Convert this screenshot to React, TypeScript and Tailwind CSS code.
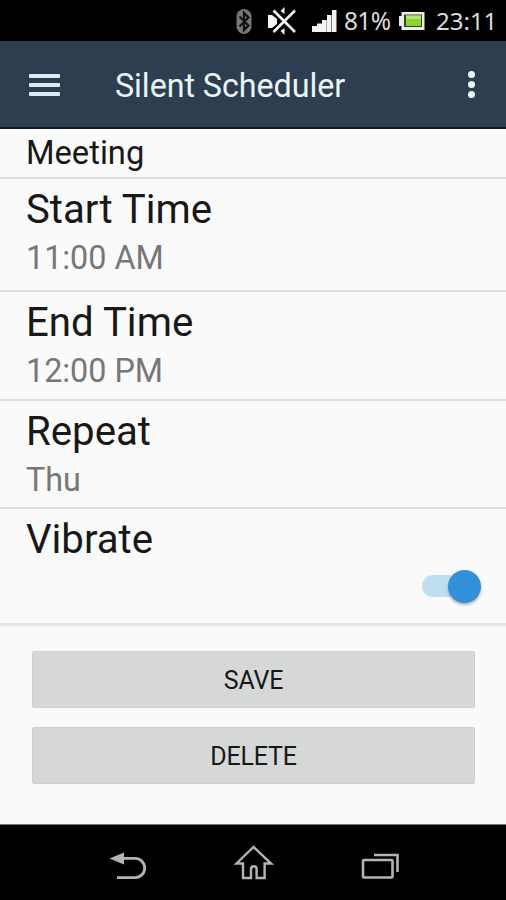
import React from "react";

function StatusBar() {
  return (
    <div className="flex h-[41px] w-full items-center bg-black pl-[235px] font-['Noto_Sans',sans-serif] text-[#dcdcdc]">
      <svg width="107" height="41" viewBox="235 0 107 41" className="shrink-0">
        <rect x="236.5" y="9" width="15" height="25" rx="7.5" fill="#777" />
        <path d="M239.5 16.5l9 9-4.5 4.5V13l4.5 4.5-9 9" fill="none" stroke="#111" strokeWidth="2.2" />
        <path d="M268 15h4l5 4v5l-5 4h-4z" fill="#f4f4f4" />
        <path d="M280.500 11l4-4v7zM280.500 31l4 4v-7z" fill="#f4f4f4" />
        <path d="M273.500 10.500l21.500 21.500M295 10.500l-21.500 21.500" stroke="#f4f4f4" strokeWidth="2.600" />
        <path d="M312 26h5v6h-5zM317 23.500h5v8.500h-5zM322 20h4.700v12H322zM327 15h4.500v17H327zM332 10h4.500v22H332z" fill="#f4f4f4" />
      </svg>
      <span className="w-[57px] shrink-0 whitespace-nowrap pl-[2px] text-[24.500px] leading-[41px] tracking-[-0.7px]">81%</span>
      <svg width="28" height="41" viewBox="399 0 28 41" className="shrink-0">
        <path d="M398.500 16h3v-4h23v18h-23v-4h-3z" fill="#eeeee8" />
        <rect x="404" y="14.500" width="18" height="12.500" fill="#36432a" />
        <rect x="406" y="15.500" width="15" height="10.500" fill="#8ed32e" />
        <rect x="406" y="15.500" width="15" height="3.500" fill="#b4e56c" />
      </svg>
      <span className="whitespace-nowrap pl-[9px] text-[24px] leading-[41px]">23:11</span>
    </div>
  );
}

function AppBar() {
  return (
    <header className="flex h-[88px] items-center border-b-2 border-[#0f1a2c] bg-[#2d3e50] pl-[29px]">
      <div className="flex w-[86px] flex-col gap-[5px] pt-[1px]">
        <span className="h-[4px] w-[31px] rounded-[1px] bg-[#dfebf1]" />
        <span className="h-[4px] w-[31px] rounded-[1px] bg-[#dfebf1]" />
        <span className="h-[4px] w-[31px] rounded-[1px] bg-[#dfebf1]" />
      </div>
      <h1 className="flex-1 whitespace-nowrap pt-[3px] text-[32.300px] font-normal leading-[40px] tracking-[-0.08px] text-[#e9f5fb]">Silent Scheduler</h1>
      <div className="flex w-[38px] flex-col gap-[3px] pt-[1px]">
        <span className="size-[7px] rounded-full bg-[#eef7fb]" />
        <span className="size-[7px] rounded-full bg-[#eef7fb]" />
        <span className="size-[7px] rounded-full bg-[#eef7fb]" />
      </div>
    </header>
  );
}

function Toggle() {
  return (
    <div className="flex justify-end pr-[24px]">
      <div className="flex h-[34px] w-[60px] items-center">
        <div className="h-[22px] w-[29px] shrink-0 rounded-l-full bg-[#bfdff1]" />
        <div className="-ml-[3px] size-[33px] shrink-0 rounded-full bg-[#3190d7] shadow-[0_2px_3px_rgba(0,0,0,0.3)]" />
      </div>
    </div>
  );
}

function Setting({ title, value }: { title: string; value: string }) {
  return (
    <>
      <div className="pt-[6px] text-[40.200px] leading-[50px]">{title}</div>
      <div className="pt-[1px] text-[32.300px] leading-[45px] text-[#777]">{value}</div>
    </>
  );
}

export default function App() {
  return (
    <div className="flex h-[900px] w-[506px] flex-col overflow-hidden bg-[#fafafa] font-['Roboto',sans-serif] text-[#181818]">
      <StatusBar />
      <AppBar />
      <div className="h-[50px] border-b-2 border-[#dedede] pl-[26px] text-[32.700px] leading-[48px]">Meeting</div>
      <section className="h-[113px] border-b-2 border-[#dedede] pl-[26px]">
        <Setting title="Start Time" value="11:00 AM" />
      </section>
      <section className="h-[109px] border-b-2 border-[#dedede] pl-[26px]">
        <Setting title="End Time" value="12:00 PM" />
      </section>
      <section className="h-[108px] border-b-2 border-[#dedede] pl-[26px]">
        <Setting title="Repeat" value="Thu" />
      </section>
      <section className="h-[117px] border-b-[3px] border-[#e6e6e6] pl-[26px]">
        <div className="pt-[6px] text-[40.200px] leading-[50px]">Vibrate</div>
        <div className="pt-[4px]">
          <Toggle />
        </div>
      </section>
      <div className="flex flex-1 flex-col gap-[19px] px-[32px] pt-[25px]">
        <button className="h-[57px] w-[443px] shrink-0 rounded-[2px] border border-[#cdcfce] bg-[#d6d8d7] pt-[2px] text-[25px] tracking-[-0.2px]">SAVE</button>
        <button className="h-[57px] w-[443px] shrink-0 rounded-[2px] border border-[#cdcfce] bg-[#d6d8d7] pt-[2px] text-[25px] tracking-[-0.2px]">DELETE</button>
      </div>
      <nav className="h-[76px] shrink-0 border-t border-[#777] bg-black">
        <svg className="block" width="506" height="75" viewBox="0 825 506 75" fill="none" stroke="#b4b4b4" strokeWidth="2.400">
          <path d="M109.500 858.500l14.500-6v12z" fill="#b4b4b4" stroke="none" />
          <path d="M123 858.300h12a9.700 9.700 0 0 1 0 19.400H117" strokeWidth="2.800" />
          <path d="M253.500 847l-17 16.500h6.500v14.500h8v-9a2.800 2.800 0 0 1 5.600 0v9h8v-14.500h6.500z" />
          <rect x="363" y="860" width="29.500" height="17.500" rx="1" strokeWidth="2.600" />
          <path d="M374 855h23.500v17" strokeWidth="2.600" />
        </svg>
      </nav>
    </div>
  );
}
